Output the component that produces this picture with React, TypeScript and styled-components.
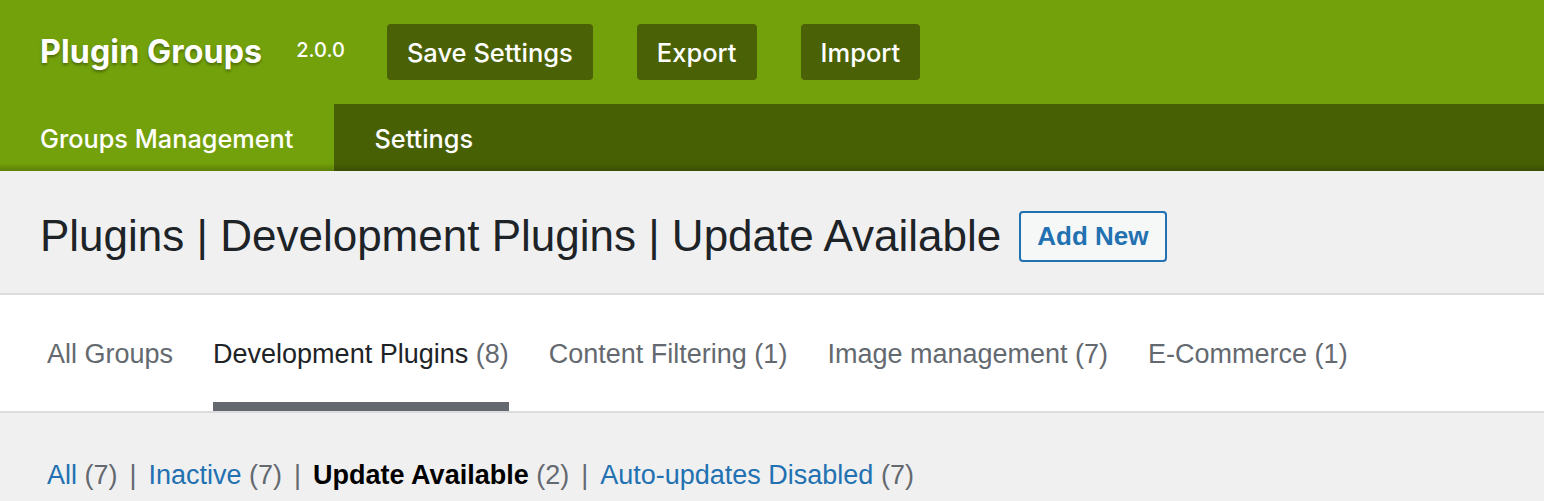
import React from "react";
import styled, { createGlobalStyle } from "styled-components";

const Global = createGlobalStyle`
  html, body { margin: 0; padding: 0; background: #f0f0f1; }
  body { font-family: "Liberation Sans", Arial, sans-serif; color: #1d2327; }
  * { box-sizing: border-box; }
`;

const Header = styled.header`
  background: #73a10b;
  font-family: Inter, "Noto Sans", sans-serif;
  color: #fff;
`;

const TopBar = styled.div`
  height: 104px;
  display: flex;
  align-items: center;
  padding: 0 40px;
`;

const Brand = styled.h1`
  margin: 0;
  font-size: 32.2px;
  font-weight: 700;
  letter-spacing: 0.1px;
  text-shadow: 0 2px 3px rgba(0, 0, 0, 0.35);
  position: relative;
  top: -1px;
`;

const Version = styled.span`
  margin-left: 34px;
  margin-right: 42px;
  font-size: 20px;
  font-weight: 500;
  position: relative;
  top: -2px;
`;

const HeadButton = styled.button`
  height: 56px;
  padding: 0 20px;
  margin-right: 44px;
  border: 0;
  border-radius: 4px;
  background: #4a6205;
  color: #fff;
  font-family: Inter, "Noto Sans", sans-serif;
  font-size: 25.5px;
  font-weight: 500;
`;

const NavBar = styled.nav`
  height: 67px;
  display: flex;
  background: linear-gradient(to bottom, #486004 0%, #486004 88%, #3b4f02 100%);
`;

const NavTab = styled.a<{ $active?: boolean }>`
  display: flex;
  align-items: center;
  padding: 2px 41px 0 40px;
  font-size: 25.3px;
  font-weight: 500;
  color: #fff;
  background: ${(p) =>
    p.$active
      ? "linear-gradient(to bottom, #73a10b 0%, #73a10b 88%, #5c8008 100%)"
      : "transparent"};
`;

const TitleWrap = styled.div`
  height: 124px;
  display: flex;
  align-items: center;
  padding: 8px 40px 0;
  border-bottom: 2px solid #dcdcde;
`;

const Title = styled.h2`
  margin: 0;
  font-size: 44px;
  font-weight: 400;
  color: #1d2327;
`;

const AddNew = styled.a`
  margin-left: 18px;
  height: 51px;
  display: flex;
  align-items: center;
  padding: 0 16px;
  border: 2px solid #2271b1;
  border-radius: 4px;
  background: #f6f7f7;
  color: #2271b1;
  font-size: 26px;
  font-weight: 700;
`;

const TabsBar = styled.div`
  background: #fff;
  height: 118px;
  display: flex;
  align-items: flex-end;
  padding-left: 47px;
  border-bottom: 2px solid #dcdcde;
`;

const GroupTab = styled.a<{ $active?: boolean }>`
  margin-right: 40px;
  padding-bottom: 34px;
  font-size: 27px;
  line-height: 1;
  color: ${(p) => (p.$active ? "#1d2327" : "#646970")};
  border-bottom: 9px solid ${(p) => (p.$active ? "#646970" : "transparent")};
  white-space: nowrap;
`;

const Count = styled.span`
  color: #646970;
`;

const Filters = styled.ul`
  list-style: none;
  margin: 0;
  padding: 47px 0 0 47px;
  display: flex;
  font-size: 27px;
  color: #646970;
`;

const Filter = styled.li`
  white-space: pre;
`;

const FilterLink = styled.a<{ $current?: boolean }>`
  color: ${(p) => (p.$current ? "#000" : "#2271b1")};
  font-weight: ${(p) => (p.$current ? 700 : 400)};
`;

const Sep = styled.span`
  margin: 0 12px;
  color: #646970;
`;

const groups = [
  { name: "All Groups" },
  { name: "Development Plugins", count: 8, active: true },
  { name: "Content Filtering", count: 1 },
  { name: "Image management", count: 7 },
  { name: "E-Commerce", count: 1 },
];

const filters = [
  { name: "All", count: 7 },
  { name: "Inactive", count: 7 },
  { name: "Update Available", count: 2, current: true },
  { name: "Auto-updates Disabled", count: 7 },
];

export default function App() {
  return (
    <>
      <Global />
      <Header>
        <TopBar>
          <Brand>Plugin Groups</Brand>
          <Version>2.0.0</Version>
          <HeadButton>Save Settings</HeadButton>
          <HeadButton>Export</HeadButton>
          <HeadButton>Import</HeadButton>
        </TopBar>
        <NavBar>
          <NavTab $active>Groups Management</NavTab>
          <NavTab>Settings</NavTab>
        </NavBar>
      </Header>
      <TitleWrap>
        <Title>Plugins | Development Plugins | Update Available</Title>
        <AddNew>Add New</AddNew>
      </TitleWrap>
      <TabsBar>
        {groups.map((g) => (
          <GroupTab key={g.name} $active={g.active}>
            {g.name}
            {g.count !== undefined && <Count> ({g.count})</Count>}
          </GroupTab>
        ))}
      </TabsBar>
      <Filters>
        {filters.map((f, i) => (
          <Filter key={f.name}>
            <FilterLink $current={f.current}>{f.name}</FilterLink>
            <Count>{` (${f.count})`}</Count>
            {i < filters.length - 1 && <Sep>|</Sep>}
          </Filter>
        ))}
      </Filters>
    </>
  );
}
